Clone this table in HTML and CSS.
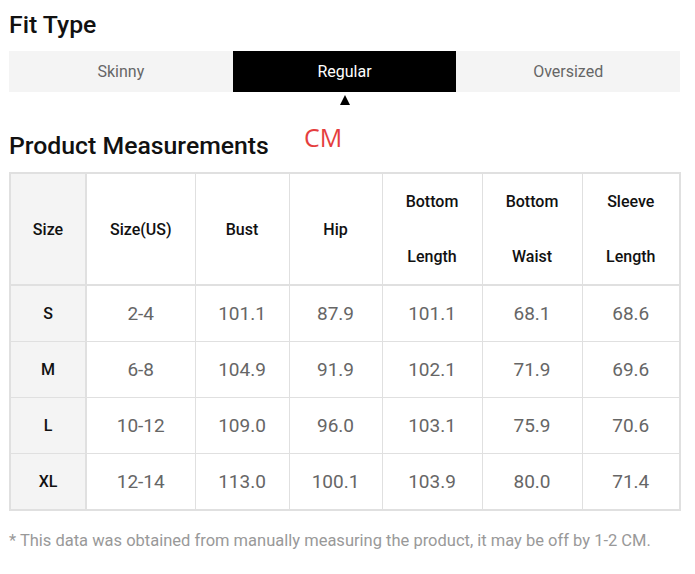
FILE: index.html
```html
<!DOCTYPE html>
<html>
<head>
<meta charset="utf-8">
<link rel="stylesheet" href="styles.css">
</head>
<body>
<div class="page">
  <h2 class="title fit-title">Fit Type</h2>
  <div class="tabs">
    <div class="tab">Skinny</div>
    <div class="tab active">Regular</div>
    <div class="tab">Oversized</div>
  </div>
  <div class="pointer-row">
    <div class="pointer-cell"></div>
    <div class="pointer-cell"><span class="pointer"></span></div>
    <div class="pointer-cell"></div>
  </div>
  <div class="measure-head">
    <h2 class="title">Product Measurements</h2>
    <span class="unit">CM</span>
  </div>
  <table class="size-table">
    <colgroup>
      <col class="c1"><col class="c2"><col class="c3"><col class="c4"><col class="c5"><col class="c6"><col class="c7">
    </colgroup>
    <thead>
      <tr>
        <th class="size-col">Size</th>
        <th>Size(US)</th>
        <th>Bust</th>
        <th>Hip</th>
        <th>Bottom<br>Length</th>
        <th>Bottom<br>Waist</th>
        <th>Sleeve<br>Length</th>
      </tr>
    </thead>
    <tbody>
      <tr><td class="size-col">S</td><td>2-4</td><td>101.1</td><td>87.9</td><td>101.1</td><td>68.1</td><td>68.6</td></tr>
      <tr><td class="size-col">M</td><td>6-8</td><td>104.9</td><td>91.9</td><td>102.1</td><td>71.9</td><td>69.6</td></tr>
      <tr><td class="size-col">L</td><td>10-12</td><td>109.0</td><td>96.0</td><td>103.1</td><td>75.9</td><td>70.6</td></tr>
      <tr><td class="size-col">XL</td><td>12-14</td><td>113.0</td><td>100.1</td><td>103.9</td><td>80.0</td><td>71.4</td></tr>
    </tbody>
  </table>
  <p class="note">* This data was obtained from manually measuring the product, it may be off by 1-2 CM.</p>
</div>
</body>
</html>
```
FILE: styles.css
```css
html, body {
  margin: 0;
  padding: 0;
  background: #fff;
}
body {
  font-family: Roboto, "Liberation Sans", Arial, sans-serif;
  color: #222;
}
.page {
  width: 671px;
  padding: 10px 0 0 9px;
}
.title {
  margin: 0;
  font-size: 24.8px;
  line-height: 30px;
  font-weight: 500;
  color: #111;
}
.tabs {
  display: flex;
  margin-top: 11px;
  background: #f4f4f4;
  height: 41px;
}
.tab {
  flex: 1;
  display: flex;
  align-items: center;
  justify-content: center;
  font-size: 16px;
  color: #666;
}
.tab.active {
  background: #000;
  color: #fff;
}
.pointer-row {
  display: flex;
  height: 14px;
}
.pointer-cell {
  flex: 1;
  display: flex;
  justify-content: center;
}
.pointer {
  display: block;
  width: 0;
  height: 0;
  margin-top: 3px;
  border-left: 5.5px solid transparent;
  border-right: 5.5px solid transparent;
  border-bottom: 10px solid #000;
}
.measure-head {
  display: flex;
  align-items: flex-start;
  gap: 35px;
  margin-top: 18px;
}
.measure-head .title {
  margin-top: 7px;
}
.unit {
  font-family: "Open Sans", "Liberation Sans", sans-serif;
  font-size: 25px;
  line-height: 26px;
  color: #e53e3e;
}
.size-table {
  margin-top: 11px;
  width: 670px;
  border-collapse: collapse;
  table-layout: fixed;
  text-align: center;
  border: 2px solid #e0e0e0;
}
.c1 { width: 76px; }
.c2 { width: 109px; }
.c3 { width: 94px; }
.c4 { width: 93px; }
.c5 { width: 100px; }
.c6 { width: 100px; }
.c7 { width: 98px; }
.size-table th,
.size-table td {
  border: 1px solid #e0e0e0;
  padding: 0;
}
.size-table th {
  font-size: 16px;
  font-weight: 500;
  color: #111;
  line-height: 55px;
  height: 110px;
}
.size-table thead tr {
  border-bottom: 2px solid #e0e0e0;
}
.size-table td {
  font-size: 19px;
  color: #666;
  height: 55px;
}
.size-table .size-col {
  background: #f4f4f4;
  font-size: 16px;
  font-weight: 500;
  color: #111;
  border-right: 2px solid #e0e0e0;
}
.note {
  margin: 19px 0 0;
  font-size: 16.5px;
  line-height: 22px;
  color: #999;
}
```
